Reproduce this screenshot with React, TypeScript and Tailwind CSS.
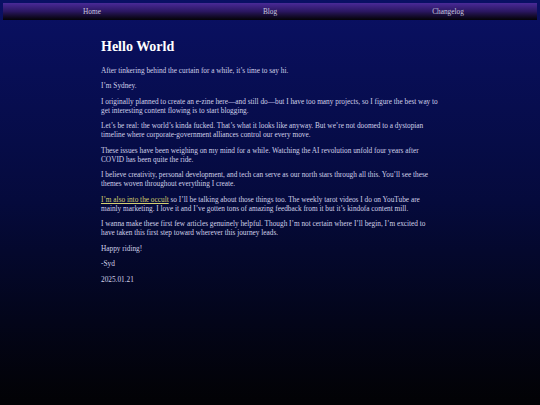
import React from 'react';

const links = ['Home', 'Blog', 'Changelog'];

const paragraphs: React.ReactNode[] = [
    "After tinkering behind the curtain for a while, it\u2019s time to say hi.",
    "I\u2019m Sydney.",
    "I originally planned to create an e-zine here\u2014and still do\u2014but I have too many projects, so I figure the best way to get interesting content flowing is to start blogging.",
    "Let\u2019s be real: the world\u2019s kinda fucked. That\u2019s what it looks like anyway. But we\u2019re not doomed to a dystopian timeline where corporate-government alliances control our every move.",
    "These issues have been weighing on my mind for a while. Watching the AI revolution unfold four years after COVID has been quite the ride.",
    "I believe creativity, personal development, and tech can serve as our north stars through all this. You\u2019ll see these themes woven throughout everything I create.",
    <>
        <a href="#" className="text-[#d6d070] underline">I&rsquo;m also into the occult</a> so I&rsquo;ll be talking about those things too. The weekly tarot videos I do on YouTube are mainly marketing. I love it and I&rsquo;ve gotten tons of amazing feedback from it but it&rsquo;s kindofa content mill.
    </>,
    "I wanna make these first few articles genuinely helpful. Though I\u2019m not certain where I\u2019ll begin, I\u2019m excited to have taken this first step toward wherever this journey leads.",
    "Happy riding!",
    "-Syd",
    "2025.01.21",
];

export default function App() {
    return (
        <div className="min-h-[405px] bg-gradient-to-b from-[#0a1064] via-[#050a3c] to-[#020205] px-[3px] pt-[3px] pb-10 font-['Liberation_Serif',serif] text-[#d0d0e8]">
            {/* Nav */}
            <nav className="grid grid-cols-3 h-[17px] pt-[2px] bg-gradient-to-b from-[#4a2a98] via-[#2a1660] to-[#050308] text-[7.3px] text-[#c8c8dc]">
                {links.map(l => (
                    <a key={l} href="#" className="flex items-center justify-center">{l}</a>
                ))}
            </nav>

            {/* Post */}
            <main className="mx-auto w-[338px] pt-[20px]">
                <h1 className="text-[14px] font-bold text-white leading-none mb-[11.5px]">Hello World</h1>
                <div className="flex flex-col gap-[6.5px] text-[7.3px] leading-[9px]">
                    {paragraphs.map((p, i) => (
                        <p key={i}>{p}</p>
                    ))}
                </div>
            </main>
        </div>
    );
}
